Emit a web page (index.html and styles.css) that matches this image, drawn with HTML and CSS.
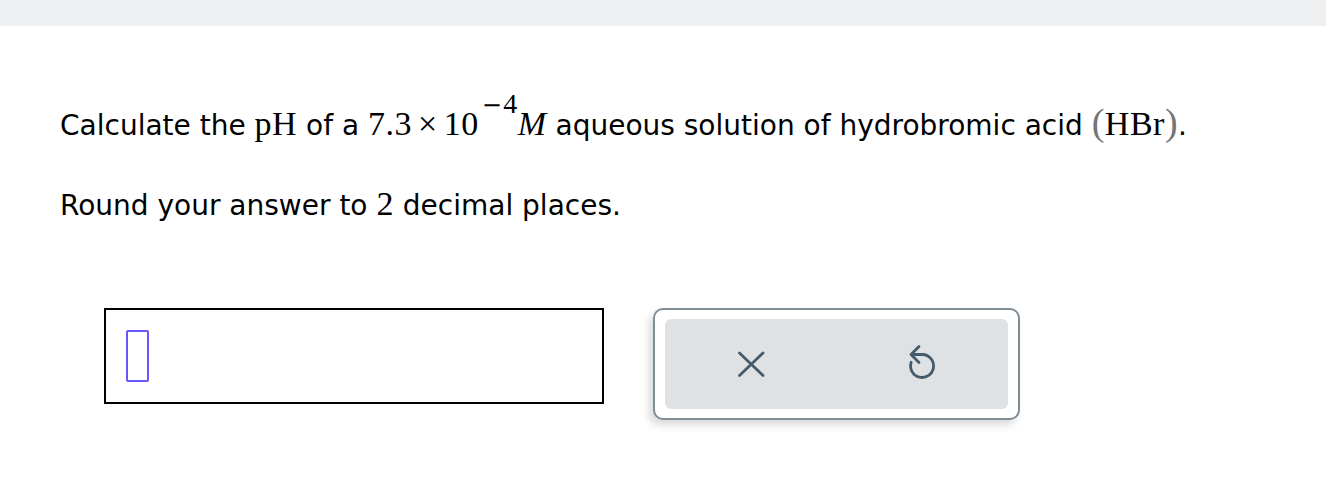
FILE: index.html
```html
<!DOCTYPE html>
<html lang="en">
<head>
<meta charset="utf-8">
<title>pH question</title>
<link rel="stylesheet" href="styles.css">
</head>
<body>
<div class="topbar"></div>
<main class="question">
  <p class="line">Calculate the <span class="math">pH</span> of a <span class="math">7.3<span class="op">×</span>10<sup class="sup"><span class="minus">−</span>4</sup><i class="var">M</i></span> aqueous solution of hydrobromic acid <span class="math"><span class="paren">(</span>HBr<span class="paren">)</span></span>.</p>
  <p class="line">Round your answer to <span class="math">2</span> decimal places.</p>
</main>
<section class="answer-row">
  <div class="answer-box"><span class="cursor"></span></div>
  <div class="tools">
    <div class="tools-inner">
      <button class="tool" type="button" aria-label="Clear">
        <svg width="28" height="26" viewBox="0 0 28 26"><path d="M2.5 2 L26 24.5 M26 2 L2.5 24.5" fill="none" stroke="#455a6a" stroke-width="2.8" stroke-linecap="round"/></svg>
      </button>
      <button class="tool" type="button" aria-label="Undo">
        <svg class="undo" width="30" height="38" viewBox="0 0 30 38"><path d="M12 3.5 L4 11.5 L12 19.5 M4.5 11.5 H15.5 A11.5 11.5 0 1 1 4.2 19.3" fill="none" stroke="#455a6a" stroke-width="2.8" stroke-linecap="round" stroke-linejoin="round"/></svg>
      </button>
    </div>
  </div>
</section>
</body>
</html>
```
FILE: styles.css
```css
html, body {
  margin: 0;
  padding: 0;
  background: #ffffff;
}
body {
  width: 1326px;
  height: 504px;
  overflow: hidden;
  font-family: "DejaVu Sans", Verdana, sans-serif;
  color: #000;
}
.topbar {
  height: 26px;
  background: #eff0f2;
}
.question {
  padding: 78px 0 0 60px;
  font-size: 28px;
  line-height: 38px;
}
.line {
  margin: 0;
  white-space: nowrap;
}
.line + .line {
  margin-top: 42px;
}
.math {
  font-family: "Liberation Serif", "Times New Roman", serif;
  font-size: 34px;
  line-height: 0;
  letter-spacing: 0.5px;
}
.op {
  margin: 0 6px;
}
.sup {
  font-size: 28px;
  line-height: 0;
  vertical-align: 22px;
  margin-left: 3px;
}
.minus {
  font-family: "DejaVu Sans", sans-serif;
  font-size: 24px;
  margin-right: 1px;
}
.var {
  font-style: italic;
}
.paren {
  color: #757575;
  font-size: 38px;
}
.answer-row {
  margin-top: 83px;
  padding-left: 104px;
  display: flex;
  align-items: flex-start;
  gap: 49px;
}
.answer-box {
  box-sizing: border-box;
  width: 500px;
  height: 96px;
  border: 2px solid #000;
  padding: 20px 0 0 20px;
}
.cursor {
  display: block;
  box-sizing: border-box;
  width: 23px;
  height: 52px;
  border: 2.5px solid #6658fb;
  border-radius: 2px;
}
.tools {
  box-sizing: border-box;
  width: 367px;
  height: 112px;
  border: 2px solid #7f8d97;
  border-radius: 10px;
  padding: 9px 10px;
  background: #fff;
  box-shadow: -4px 5px 9px rgba(0, 0, 0, 0.15);
}
.tools-inner {
  display: flex;
  height: 100%;
  background: #dee2e5;
  border-radius: 6px;
}
.tool {
  flex: 1;
  display: flex;
  align-items: center;
  justify-content: center;
  border: 0;
  padding: 0;
  background: transparent;
}
.undo {
  margin-top: -4px;
}
```
